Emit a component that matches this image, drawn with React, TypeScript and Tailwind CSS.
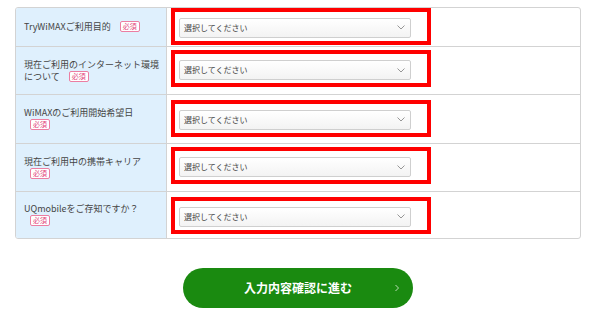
const rows = [
  { lines: ['TryWiMAXご利用目的'], badge: 'inline', h: 'h-[39px]', shift: '-translate-y-[1px]' },
  { lines: ['現在ご利用のインターネット環境', 'について'], badge: 'inline', h: 'h-[48px]', shift: '-translate-y-[2px]' },
  { lines: ['WiMAXのご利用開始希望日'], badge: 'wrap', h: 'h-[49px]', shift: '-translate-y-[1px]' },
  { lines: ['現在ご利用中の携帯キャリア'], badge: 'wrap', h: 'h-[48px]', shift: '-translate-y-[2px]' },
  { lines: ['UQmobileをご存知ですか？'], badge: 'wrap', h: 'h-[46px]', shift: 'translate-y-0' },
];

function Badge({ className = '' }: { className?: string }) {
  return (
    <span
      className={`inline-block border border-[#ec7ea2] rounded-[2px] bg-white px-[2px] text-[7px] leading-[9px] text-[#e2457a] align-[1px] ${className}`}
    >
      必須
    </span>
  );
}

function Chevron({ className = '' }: { className?: string }) {
  return (
    <svg className={className} viewBox="0 0 8 5" fill="none" stroke="currentColor" strokeWidth={0.9}>
      <path d="M0.5 0.5 L4 4 L7.5 0.5" />
    </svg>
  );
}

function SelectBox() {
  return (
    <div className="flex h-[20px] w-[232px] items-center justify-between rounded-[2px] border border-[#cfcfcf] bg-linear-to-b from-white to-[#f3f3f3] pl-[4px] pr-[5px]">
      <span className="text-[8px] leading-none text-[#444]">選択してください</span>
      <Chevron className="h-[5px] w-[8px] text-[#8a8a8a]" />
    </div>
  );
}

export default function App() {
  return (
    <div
      className="min-h-[321px] w-[600px] bg-white pt-[7px]"
      style={{ fontFamily: '"Noto Sans CJK JP", "Noto Sans", sans-serif' }}
    >
      <div className="ml-[15px] w-[566px]">
        <div className="overflow-hidden rounded-[3px] border border-[#d3d3d3]">
          {rows.map((row, i) => (
            <div
              key={i}
              className={`flex ${row.h} ${i < rows.length - 1 ? 'border-b border-[#d3d3d3]' : ''}`}
            >
              <div className="flex w-[151px] shrink-0 items-center border-r border-[#d3d3d3] bg-[#dff0fd] pl-[8px]">
                <div className="text-[9px] leading-[12px] text-[#444]">
                  {row.lines.map((l, j) => (
                    <div key={j}>
                      {l}
                      {row.badge === 'inline' && j === row.lines.length - 1 && <Badge className="ml-[9px]" />}
                    </div>
                  ))}
                  {row.badge === 'wrap' && (
                    <div>
                      <Badge className="ml-[6px]" />
                    </div>
                  )}
                </div>
              </div>
              <div className="flex flex-1 items-center pl-[4px]">
                <div className={`h-[37px] w-[260px] border-4 border-[#ff0000] pl-[4px] pt-[6px] ${row.shift}`}>
                  <SelectBox />
                </div>
              </div>
            </div>
          ))}
        </div>
        <div className="mt-[29px] flex justify-center">
          <button className="relative flex h-[40px] w-[230px] items-center justify-center rounded-full bg-[#1a8a10] text-[12px] font-bold text-white">
            入力内容確認に進む
            <svg
              className="absolute right-[14px] top-1/2 h-[7px] w-[4px] -translate-y-1/2 text-[#cde6c9]"
              viewBox="0 0 4 7"
              fill="none"
              stroke="currentColor"
              strokeWidth={0.9}
            >
              <path d="M0.5 0.5 L3.5 3.5 L0.5 6.5" />
            </svg>
          </button>
        </div>
      </div>
    </div>
  );
}
